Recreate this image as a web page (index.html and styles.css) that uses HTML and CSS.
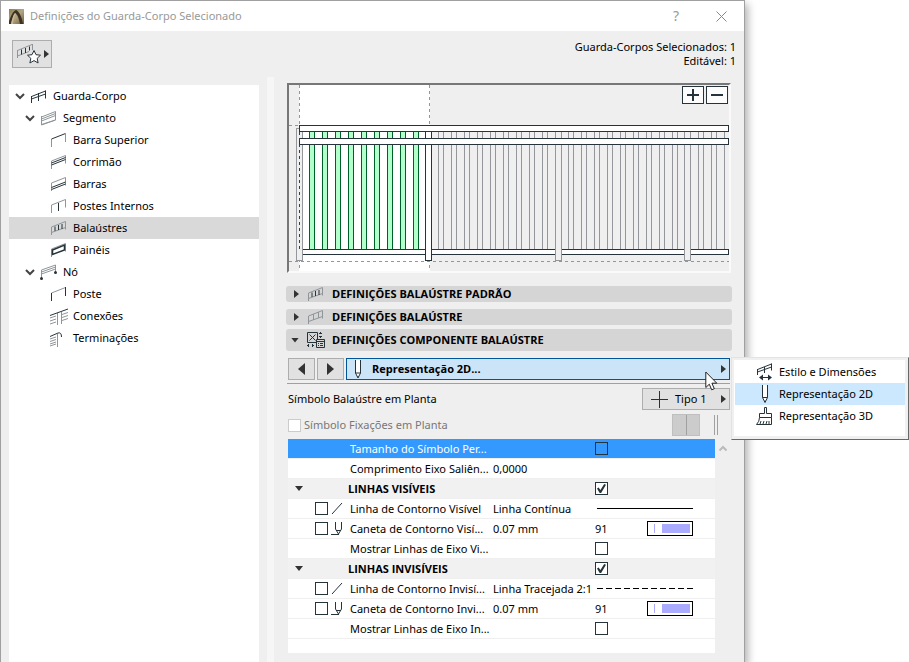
FILE: index.html
```html
<!doctype html>
<html lang="pt">
<head>
	<meta charset="utf-8">
	<title>Definições do Guarda-Corpo Selecionado</title>
	<link rel="stylesheet" href="styles.css">
</head>
<body>

<div class="dialog">
	<header class="titlebar">
		<svg class="app-icon" width="15" height="15" viewBox="0 0 15 15">
			<defs>
				<linearGradient id="arch" x1="0" x2="1" y2="1">
					<stop offset="0" stop-color="#8d7c58"/>
					<stop offset=".5" stop-color="#b3a482"/>
					<stop offset="1" stop-color="#6f5f3c"/>
				</linearGradient>
			</defs>
			<rect width="15" height="15" fill="url(#arch)"/>
			<path d="M0 15V12C2 7 4 2 7 1C10 2 13 8 14 15H11C10 10 9 6 6 4C4 7 3 11 2 15Z" fill="#3a3224"/>
			<path d="M2 15C3 10 4 6 6 4L7 5C5 8 4 12 4 15Z" fill="#c9ba92"/>
		</svg>
		<h1 class="title">Definições do Guarda-Corpo Selecionado</h1>
		<button class="title-button" type="button" aria-label="Ajuda">?</button>
		<button class="title-button" type="button" aria-label="Fechar">
			<svg width="11" height="11" viewBox="0 0 11 11" class="line-icon"><path d="M.5 .5l10 10M10.500 .5l-10 10"/></svg>
		</button>
	</header>

	<div class="toolbar">
		<button class="favorites" type="button" aria-label="Favoritos">
			<svg width="24" height="22" viewBox="0 0 24 22" class="rail">
				<path class="soft" d="M.5 15V7M.5 7.500L15 1.500M.5 13L12 8.500M15.500 1v6"/>
				<path d="M4.500 6.500v5M8.500 5v5M12.500 3.500v4"/>
				<path class="star" d="M17 7.500l2 4.200 4.500.5-3.300 3.100.9 4.700-4.100-2.400-4.100 2.400.9-4.700-3.300-3.100 4.500-.5z"/>
			</svg>
			<i class="arrow-right"></i>
		</button>
		<p class="selection-info">Guarda-Corpos Selecionados: 1<br>Editável: 1</p>
	</div>

	<div class="columns">
		<nav class="tree" aria-label="Estrutura">
			<ul>
				<li>
					<button class="node level-0" type="button">
						<svg class="chevron" width="10" height="7" viewBox="0 0 10 7"><path d="M1 1l4 4 4-4"/></svg>
						<svg class="rail" width="18" height="18" viewBox="0 0 18 18"><path d="M1.500 9.500L15.500 4M1.500 12L15.500 7M1.500 9v7M8.500 6v8M15.500 3.500v8"/></svg>
						Guarda-Corpo
					</button>
				</li>
				<li>
					<button class="node level-1" type="button">
						<svg class="chevron" width="10" height="7" viewBox="0 0 10 7"><path d="M1 1l4 4 4-4"/></svg>
						<svg class="rail" width="18" height="18" viewBox="0 0 18 18"><path class="soft" d="M1.500 8L15.500 2.500V11L1.500 15.500zM1.500 10L15.500 4.500M1.500 12L15.500 6.500"/><path class="soft" d="M1.500 7v9L15.500 11"/></svg>
						Segmento
					</button>
				</li>
				<li>
					<button class="node level-2" type="button">
						<svg class="rail" width="18" height="18" viewBox="0 0 18 18"><path class="soft" d="M1.500 8v8M15.500 3v8"/><path d="M1.500 8L15.500 2.500"/></svg>
						Barra Superior
					</button>
				</li>
				<li>
					<button class="node level-2" type="button">
						<svg class="rail" width="18" height="18" viewBox="0 0 18 18"><path class="soft" d="M1.500 16V8L15.500 2.500v8"/><path d="M1.500 10L15.500 4.500M1.500 12L15.500 6.500"/></svg>
						Corrimão
					</button>
				</li>
				<li>
					<button class="node level-2" type="button">
						<svg class="rail" width="18" height="18" viewBox="0 0 18 18"><path class="soft" d="M1.500 16V8L15.500 2.500v8"/><path d="M1.500 12.500L15.500 7M1.500 14.500L15.500 9"/></svg>
						Barras
					</button>
				</li>
				<li>
					<button class="node level-2" type="button">
						<svg class="rail" width="18" height="18" viewBox="0 0 18 18"><path class="soft" d="M1.500 16V8L15.500 2.500v8"/><path d="M8.500 6v8"/></svg>
						Postes Internos
					</button>
				</li>
				<li>
					<button class="node level-2 selected" type="button">
						<svg class="rail" width="18" height="18" viewBox="0 0 18 18"><path class="soft" d="M1.500 16V8L15.500 2.500v8M1.500 13.500L15.500 8.500"/><path d="M5 7.500v4.500M8.500 6v5M12 5v5"/></svg>
						Balaústres
					</button>
				</li>
				<li>
					<button class="node level-2" type="button">
						<svg class="rail" width="18" height="18" viewBox="0 0 18 18"><path class="soft" d="M1.500 16V8L15.500 2.500v8"/><path class="strong" d="M2.500 9L14.500 4V9L2.500 13.500z"/></svg>
						Painéis
					</button>
				</li>
				<li>
					<button class="node level-1" type="button">
						<svg class="chevron" width="10" height="7" viewBox="0 0 10 7"><path d="M1 1l4 4 4-4"/></svg>
						<svg class="rail" width="18" height="18" viewBox="0 0 18 18"><path class="soft" d="M1.500 15V7L15.500 2v7M1.500 9L15.500 4M1.500 11L15.500 6"/><circle class="dot" cx="1.500" cy="15.500" r="1.500"/><circle class="dot" cx="15.500" cy="9.500" r="1.500"/></svg>
						Nó
					</button>
				</li>
				<li>
					<button class="node level-2" type="button">
						<svg class="rail" width="18" height="18" viewBox="0 0 18 18"><path class="soft" d="M1.500 8L15.500 2.500"/><path d="M1.500 8v8M15.500 2v9"/></svg>
						Poste
					</button>
				</li>
				<li>
					<button class="node level-2" type="button">
						<svg class="rail" width="18" height="18" viewBox="0 0 18 18"><path class="soft" d="M0 11l6-2M0 14l6-2M0 17l6-2M7.500 6v12M11.500 5v12M12 7.500l6-2M12 10.500l6-2M12 13.500l6-2"/><path d="M0 8.500L18 2"/></svg>
						Conexões
					</button>
				</li>
				<li>
					<button class="node level-2" type="button">
						<svg class="rail" width="18" height="18" viewBox="0 0 18 18"><path class="soft" d="M0 10l6-2M0 12.500l6-2M0 15l6-2M0 17l6-2M7.500 5v13"/><path d="M0 7.500L8 4Q11.500 3 11.500 8"/></svg>
						Terminações
					</button>
				</li>
			</ul>
		</nav>

		<div class="splitter"></div>

		<main class="settings">
			<div class="preview">
				<svg class="drawing" viewBox="0 0 440 186" preserveAspectRatio="xMinYMin slice" shape-rendering="crispEdges">
					<rect x="10" width="131" height="186" fill="#fff"/>
					<path class="guide" d="M10.500 0V186M140.500 0V186M0 40.500H10M0 176.500H440"/>
					<!-- balusters: one thick dashed line each -->
					<path class="balusters" d="M20 105.500H130" stroke="#00602a" stroke-dasharray="6 7"/>
					<path class="balusters" d="M21 105.500H130" stroke="#b3ffcc" stroke-dasharray="4 9"/>
					<path class="balusters" d="M149 105.500H440" stroke="#93979b" stroke-dasharray="1 4 1 7"/>
					<rect class="beam" x="10.500" y="164.500" width="429" height="5"/>
					<rect class="post-soft" x="7.500" y="43.500" width="6" height="132"/>
					<rect class="post" x="136.500" y="43.500" width="6" height="132"/>
					<rect class="post-soft" x="266.500" y="43.500" width="6" height="132"/>
					<rect class="post-soft" x="395.500" y="43.500" width="6" height="132"/>
					<rect class="beam" x="10.500" y="40.500" width="429" height="6"/>
					<rect class="beam" x="10.500" y="53.500" width="429" height="6"/>
					<path class="guide green" d="M10.500 47V164"/>
				</svg>
				<div class="zoom-buttons">
					<button type="button" aria-label="Ampliar"><svg width="12" height="12" viewBox="0 0 12 12"><path d="M0 6h12M6 0v12"/></svg></button>
					<button type="button" aria-label="Reduzir"><svg width="12" height="12" viewBox="0 0 12 12"><path d="M0 6h12"/></svg></button>
				</div>
			</div>

			<button class="section" type="button">
				<i class="arrow-right"></i>
				<svg class="rail" width="18" height="16" viewBox="0 0 18 16"><path class="soft" d="M1.500 15V7L15.500 1.500v8M1.500 12.500L15.500 7.500"/><path d="M5 6.500v4.500M8.500 5v5M12 4v5"/></svg>
				DEFINIÇÕES BALAÚSTRE PADRÃO
			</button>
			<button class="section" type="button">
				<i class="arrow-right"></i>
				<svg class="rail" width="18" height="16" viewBox="0 0 18 16"><path class="soft" d="M1.500 15V7L15.500 1.500v8M1.500 12.500L15.500 7.500M6.500 5v6M11.500 3v6"/></svg>
				DEFINIÇÕES BALAÚSTRE
			</button>
			<button class="section open" type="button">
				<i class="arrow-down"></i>
				<svg class="rail" width="18" height="16" viewBox="0 0 18 16">
					<path d="M.5 .5h10v10H.5zM2.500 2.500l6 6M8.500 2.500l-6 6"/>
					<path class="panel" d="M9.500 7.500h8v8h-8z"/>
					<path d="M9.500 9.500h8M11 11.500h1M13 11.500h3M11 13.500h1M13 13.500h3M13.500 0v2M13.500 4v2M12 1.500h3M12 4.500h3M0 13.500h2M5 13.500h2M1.500 12v3M5.500 12v3"/>
				</svg>
				DEFINIÇÕES COMPONENTE BALAÚSTRE
			</button>

			<div class="pages">
				<button class="step" type="button" aria-label="Anterior"><i class="arrow-left big"></i></button>
				<button class="step" type="button" aria-label="Seguinte"><i class="arrow-right big"></i></button>
				<button class="page-picker" type="button">
					<svg class="rail pencil" width="8" height="19" viewBox="0 0 8 19"><path d="M1.500 0v13h5V0M1.500 13l2.500 5 2.500-5M3.500 16.500h1"/></svg>
					<span>Representação 2D...</span>
					<i class="arrow-right"></i>
				</button>

				<svg class="cursor" width="14" height="21" viewBox="0 0 14 21"><path d="M.8 1v15.500l3.500-3.300 2.400 5.600 2.600-1.100-2.400-5.500h4.900z"/></svg>

				<div class="menu" role="menu">
					<button type="button" role="menuitem">
						<svg class="rail" width="18" height="18" viewBox="0 0 18 18"><path d="M1.500 6.500L15.500 1M1.500 9L15.500 4M1.500 6v6M8.500 4v6M15.500 .5v7M5 14.500h9"/><path class="dot" d="M7 11.500v6l-4-3zM12 11.500v6l4-3z"/></svg>
						Estilo e Dimensões
					</button>
					<button class="current" type="button" role="menuitem">
						<svg class="rail" width="18" height="18" viewBox="0 0 18 18"><path class="paper" d="M6.500 0v12.500h5V0M6.500 12.500l2.500 5 2.500-5M8.500 16h1"/></svg>
						Representação 2D
					</button>
					<button type="button" role="menuitem">
						<svg class="rail" width="18" height="18" viewBox="0 0 18 18"><path d="M8.500 6.500v-6h2v6h5v4h-12v-4zM3.500 10.500q0 4-3 7h15v-7M4 17l1-3M7 17l1-3M10 17l1-3M13 17v-3"/></svg>
						Representação 3D
					</button>
				</div>
			</div>

			<div class="field">
				<span>Símbolo Balaústre em Planta</span>
				<button class="symbol-type" type="button">
					<svg class="rail" width="17" height="17" viewBox="0 0 17 17"><path d="M0 8.500h17M8.500 0v17"/></svg>
					Tipo 1
					<i class="arrow-right"></i>
				</button>
			</div>
			<div class="field disabled">
				<input id="fixings" type="checkbox" disabled>
				<label for="fixings">Símbolo Fixações em Planta</label>
				<span class="swatch"></span>
				<span class="bars"></span>
			</div>

			<div class="list">
				<table class="parameters">
					<colgroup>
						<col class="col-toggle"><col class="col-icon"><col class="col-name"><col class="col-value"><col>
					</colgroup>
					<tbody>
					<tr class="active">
						<td></td><td></td>
						<td><label for="customSize">Tamanho do Símbolo Per...</label></td>
						<td></td>
						<td><input id="customSize" type="checkbox"></td>
					</tr>
					<tr>
						<td></td><td></td>
						<td>Comprimento Eixo Saliên...</td>
						<td>0,0000</td>
						<td></td>
					</tr>
					<tr class="group">
						<td><i class="arrow-down"></i></td><td></td>
						<th colspan="2"><label for="visible">LINHAS VISÍVEIS</label></th>
						<td><input id="visible" type="checkbox" checked></td>
					</tr>
					<tr>
						<td></td>
						<td><div class="marks"><input type="checkbox" aria-label="Linha de Contorno Visível"><svg class="rail" width="12" height="13" viewBox="0 0 12 13"><path d="M1 12L11 1"/></svg></div></td>
						<td>Linha de Contorno Visível</td>
						<td>Linha Contínua</td>
						<td><div class="line-sample"></div></td>
					</tr>
					<tr>
						<td></td>
						<td><div class="marks"><input type="checkbox" aria-label="Caneta de Contorno Visível"><svg class="rail" width="12" height="13" viewBox="0 0 12 13"><path d="M4.500 0v7l3 5 3-5V0M5 8.500h5M0 12.500h8"/></svg></div></td>
						<td>Caneta de Contorno Visí...</td>
						<td>0.07 mm</td>
						<td><div class="pen">91<span class="pen-sample"></span></div></td>
					</tr>
					<tr>
						<td></td><td></td>
						<td><label for="visibleAxis">Mostrar Linhas de Eixo Vi...</label></td>
						<td></td>
						<td><input id="visibleAxis" type="checkbox"></td>
					</tr>
					<tr class="group">
						<td><i class="arrow-down"></i></td><td></td>
						<th colspan="2"><label for="hiddenLines">LINHAS INVISÍVEIS</label></th>
						<td><input id="hiddenLines" type="checkbox" checked></td>
					</tr>
					<tr>
						<td></td>
						<td><div class="marks"><input type="checkbox" aria-label="Linha de Contorno Invisível"><svg class="rail" width="12" height="13" viewBox="0 0 12 13"><path d="M1 12L11 1"/></svg></div></td>
						<td>Linha de Contorno Invisí...</td>
						<td>Linha Tracejada 2:1</td>
						<td><div class="line-sample dashed"></div></td>
					</tr>
					<tr>
						<td></td>
						<td><div class="marks"><input type="checkbox" aria-label="Caneta de Contorno Invisível"><svg class="rail" width="12" height="13" viewBox="0 0 12 13"><path d="M4.500 0v7l3 5 3-5V0M5 8.500h5M0 12.500h8"/></svg></div></td>
						<td>Caneta de Contorno Invi...</td>
						<td>0.07 mm</td>
						<td><div class="pen">91<span class="pen-sample"></span></div></td>
					</tr>
					<tr>
						<td></td><td></td>
						<td><label for="hiddenAxis">Mostrar Linhas de Eixo In...</label></td>
						<td></td>
						<td><input id="hiddenAxis" type="checkbox"></td>
					</tr>
					</tbody>
				</table>
				<div class="scroll">
					<svg width="8" height="7" viewBox="0 0 8 7"><path d="M.5 5.500L4 2l3.500 3.500"/></svg>
				</div>
			</div>
		</main>
	</div>
</div>

</body>
</html>
```

FILE: styles.css
```css
* {
    box-sizing: border-box;
}

body {
    margin: 0;
    background: #fff;
    color: #000;
    font: 11px/20px "Noto Sans", "Open Sans", sans-serif;
    overflow: hidden;
}

h1, p, ul {
    margin: 0;
    padding: 0;
}

ul {
    list-style: none;
}

svg {
    display: block;
    flex: none;
}

button {
    margin: 0;
    padding: 0;
    border: none;
    background: none;
    color: inherit;
    font: inherit;
    text-align: left;
    white-space: nowrap;
}

.dialog {
    display: flex;
    flex-direction: column;
    min-height: 100vh;
    margin-right: 164px;
    border: 1px solid #a0a0a0;
    border-bottom: none;
    background: #efefef;
    box-shadow: 3px 4px 8px rgba(0, 0, 0, 0.3);
}

/* title bar */

.titlebar {
    display: flex;
    align-items: center;
    height: 30px;
    padding: 0 8px;
    background: #fff;
    color: #999;
}

.title {
    flex: 1;
    margin-left: 6px;
    font-size: 11px;
    font-weight: normal;
}

.title-button {
    display: flex;
    align-items: center;
    justify-content: center;
    width: 30px;
    margin-left: 15px;
    font-size: 14px;
}

.line-icon {
    fill: none;
    stroke: #888;
}

/* toolbar */

.toolbar {
    display: flex;
    justify-content: space-between;
    align-items: flex-start;
    height: 46px;
    padding: 9px 8px 0 11px;
}

.favorites {
    display: flex;
    align-items: center;
    gap: 3px;
    width: 40px;
    height: 28px;
    padding-left: 4px;
    border: 1px solid #adadad;
    background: #e1e1e1;
}

.selection-info {
    line-height: 14px;
    text-align: right;
}

/* icons */

.rail {
    fill: none;
    stroke: #26333b;
}

.rail .soft {
    stroke: #8f9599;
}

.rail .strong {
    stroke-width: 1.5;
}

.rail .star,
.rail .paper {
    fill: #fff;
}

.rail .panel {
    fill: #d5d5d5;
}

.rail .dot {
    fill: #26333b;
    stroke: none;
}

.arrow-right,
.arrow-left,
.arrow-down {
    flex: none;
    width: 5px;
    height: 8px;
    background: #333;
    clip-path: polygon(0 0, 100% 50%, 0 100%);
}

.arrow-left {
    clip-path: polygon(100% 0, 0 50%, 100% 100%);
}

.arrow-down {
    width: 8px;
    height: 5px;
    clip-path: polygon(0 0, 100% 0, 50% 100%);
}

.big {
    width: 7px;
    height: 12px;
}

/* tree */

.columns {
    display: flex;
    flex: 1;
}

.tree {
    width: 250px;
    margin: 8px 8px 0;
    background: #fff;
}

.node {
    display: flex;
    align-items: center;
    width: 100%;
    height: 22px;
    gap: 5px;
}

.chevron {
    fill: none;
    stroke: #444;
    stroke-width: 2;
}

.level-0 {
    padding-left: 6px;
}

.level-1 {
    padding-left: 16px;
}

.level-2 {
    padding-left: 41px;
}

.selected {
    background: #d9d9d9;
}

.splitter {
    width: 7px;
    background: #f6f6f6;
}

/* right side */

.settings {
    flex: 1;
    min-width: 0;
    padding: 6px 12px 0;
}

.preview {
    position: relative;
    height: 190px;
    margin: 0 1px 13px;
    border: 2px solid;
    border-color: #777 #fafafa #fafafa #777;
    overflow: hidden;
}

.drawing {
    width: 100%;
    height: 186px;
}

.guide {
    fill: none;
    stroke: #93979b;
    stroke-dasharray: 3 3;
}

.green {
    stroke: #00602a;
}

.balusters {
    stroke-width: 119px;
}

.beam,
.post {
    fill: #fff;
    stroke: #26333b;
}

.post-soft {
    fill: #efefef;
    stroke: #93979b;
}

.zoom-buttons {
    position: absolute;
    top: 1px;
    right: 1px;
    display: flex;
    gap: 2px;
}

.zoom-buttons button {
    display: flex;
    align-items: center;
    justify-content: center;
    width: 22px;
    height: 18px;
    border: 1px solid #26333b;
    background: #fcfcfc;
}

.zoom-buttons svg {
    stroke: #26333b;
    stroke-width: 2;
}

.section {
    display: flex;
    align-items: center;
    width: 100%;
    height: 16px;
    margin-bottom: 7px;
    padding-left: 8px;
    border-radius: 3px;
    background: #d5d5d5;
    font-family: "Open Sans", "Noto Sans", sans-serif;
    font-weight: bold;
}

.section .rail {
    margin: 0 7px 0 8px;
}

.section.open {
    height: 22px;
    margin-top: -3px;
    padding-left: 5px;
}

.pages {
    position: relative;
    display: flex;
    gap: 2px;
    margin: 0 2px 4px 1px;
    padding: 0 0 3px 1px;
    border-bottom: 1px solid #a0a0a0;
}

.step {
    display: flex;
    align-items: center;
    justify-content: center;
    width: 27px;
    height: 22px;
    border: 1px solid #adadad;
    background: #e1e1e1;
}

.page-picker {
    display: flex;
    align-items: center;
    flex: 1;
    height: 22px;
    padding: 0 3px 0 7px;
    border: 1px solid #005499;
    background: #cce4f7;
    font-family: "Open Sans", "Noto Sans", sans-serif;
    font-weight: bold;
}

.page-picker .pencil {
    fill: #fff;
}

.page-picker span {
    flex: 1;
    margin-left: 10px;
}

.cursor {
    position: absolute;
    top: 13px;
    right: 11px;
    fill: #fff;
    stroke: #222;
}

.menu {
    position: absolute;
    top: -1px;
    left: 100%;
    width: 178px;
    margin-left: 1px;
    padding: 3px 3px 12px;
    border: 1px solid;
    border-color: #e3e3e3 #696969 #696969 #e3e3e3;
    background: #fff;
    box-shadow: inset 0 0 0 2px #f0f0f0, inset -1px -1px 0 2px #f0f0f0;
}

.menu button {
    display: flex;
    align-items: center;
    gap: 5px;
    width: 100%;
    height: 22px;
    padding-left: 21px;
}

.menu .current {
    background: #cce8ff;
}

.field {
    display: flex;
    align-items: center;
    justify-content: space-between;
    height: 22px;
    margin: 0 2px 4px;
}

.symbol-type {
    display: flex;
    align-items: center;
    gap: 7px;
    width: 88px;
    height: 22px;
    padding: 0 3px 0 8px;
    border: 1px solid #adadad;
    background: #e1e1e1;
}

.symbol-type .arrow-right {
    margin-left: auto;
}

.disabled {
    margin-bottom: 3px;
    color: #777;
}

.disabled label {
    flex: 1;
    margin-left: 3px;
}

.swatch {
    width: 28px;
    height: 22px;
    border: 1px solid #bfbfbf;
    background: linear-gradient(#a0a0a0, #a0a0a0) center / 1px 100% no-repeat #ccc;
}

.bars {
    width: 4px;
    height: 20px;
    margin: 0 12px 0 14px;
    border: solid #a0a0a0;
    border-width: 0 1px;
}

/* tick boxes */

input[type="checkbox"] {
    display: block;
    flex: none;
    width: 13px;
    height: 13px;
    margin: 0;
    border: 1px solid #26333b;
    background: #fff;
    appearance: none;
}

input[type="checkbox"]:disabled {
    border-color: #ccc;
}

input[type="checkbox"]:checked::after {
    content: "";
    display: block;
    width: 9px;
    height: 9px;
    margin: 1px;
    background: #26333b;
    clip-path: polygon(0 50%, 18% 40%, 38% 68%, 80% 0, 100% 8%, 46% 100%, 30% 100%);
}

/* parameters */

.list {
    display: flex;
    margin-left: 2px;
}

.parameters {
    flex: 1;
    table-layout: fixed;
    border-collapse: separate;
    border-spacing: 0;
    padding-bottom: 14px;
    background: #fff;
}

.parameters td,
.parameters th {
    height: 20px;
    padding: 0;
    border-bottom: 1px solid #efefef;
    line-height: 19px;
    text-align: left;
    white-space: nowrap;
}

.parameters th {
    font-family: "Open Sans", "Noto Sans", sans-serif;
}

.parameters th label {
    margin-left: -2px;
}

.col-toggle {
    width: 27px;
}

.col-icon {
    width: 35px;
}

.col-name {
    width: 143px;
}

.col-value {
    width: 102px;
}

.active td {
    background: #3399ff;
    color: #fff;
}

.active input[type="checkbox"] {
    background: transparent;
}

.group td,
.group th {
    background: #f1f1f1;
}

.group .arrow-down {
    display: block;
    margin-left: 7px;
}

.marks {
    display: flex;
    align-items: center;
    gap: 3px;
}

.line-sample {
    width: 96px;
    height: 1px;
    margin-left: 2px;
    background: #000;
}

.line-sample.dashed {
    background: repeating-linear-gradient(90deg, #000 0 6px, transparent 6px 9px);
}

.pen {
    display: flex;
    align-items: center;
    justify-content: space-between;
    width: 98px;
}

.pen-sample {
    width: 46px;
    height: 15px;
    padding: 2px;
    border: 1px solid #000;
    background: linear-gradient(90deg, transparent 4px, #aaaaff 4px 5px, transparent 5px 12px, #aaaaff 12px) content-box #fff;
}

.scroll {
    width: 17px;
    padding: 6px 0 0 4px;
}

.scroll svg {
    fill: none;
    stroke: #bbb;
    stroke-width: 2;
}
```
